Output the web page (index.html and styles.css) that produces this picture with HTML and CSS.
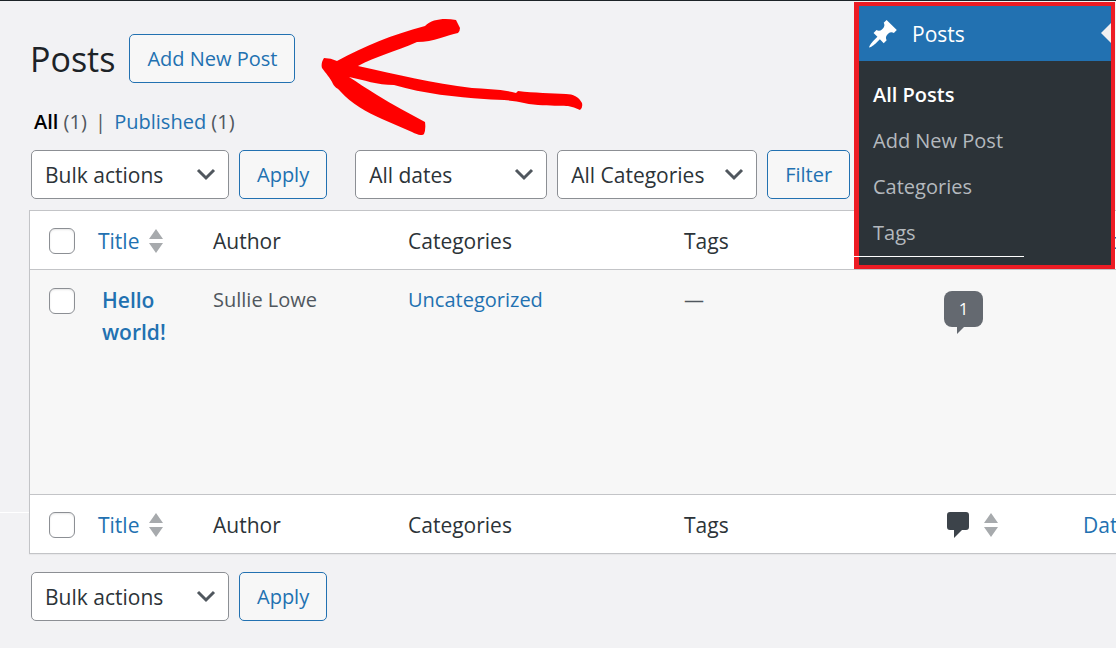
FILE: index.html
```html
<!DOCTYPE html>
<html lang="en">
  <head>
    <meta charset="UTF-8" />
    <meta name="viewport" content="width=device-width, initial-scale=1.0" />
    <title>Posts</title>
    <link rel="stylesheet" href="styles.css" />
  </head>
  <body>
    <main class="wrap">
      <header class="pageHead">
        <h1>Posts</h1>
        <button class="button" type="button">Add New Post</button>
      </header>

      <nav class="views">
        <a class="current" href="#">All</a> <span>(1)</span>
        <span class="sep">|</span>
        <a href="#">Published</a> <span>(1)</span>
      </nav>

      <div class="tablenav">
        <select class="bulk" aria-label="Bulk actions">
          <option>Bulk actions</option>
        </select>
        <button class="button" type="button">Apply</button>
        <div class="filters">
          <select class="dates" aria-label="Filter by date">
            <option>All dates</option>
          </select>
          <select class="cats" aria-label="Filter by category">
            <option>All Categories</option>
          </select>
          <button class="button" type="button">Filter</button>
        </div>
      </div>

      <div class="tableWrap">
        <table class="posts">
          <colgroup>
            <col class="colCheck" />
            <col class="colTitle" />
            <col class="colAuthor" />
            <col class="colCats" />
            <col class="colTags" />
            <col class="colComments" />
            <col />
          </colgroup>
          <thead>
            <tr>
              <th class="check"><input type="checkbox" aria-label="Select all" /></th>
              <th>
                <a class="sortable" href="#">Title
                  <svg class="sort" viewBox="0 0 14 24"><path d="M7 0l7 10H0zM0 14h14L7 24z" /></svg>
                </a>
              </th>
              <th>Author</th>
              <th>Categories</th>
              <th>Tags</th>
              <th>
                <a class="sortable comments" href="#" aria-label="Comments">
                  <svg class="bubble" viewBox="0 0 22 26"><path d="M3 0h16a3 3 0 0 1 3 3v12a3 3 0 0 1-3 3h-4l-8 8v-8H3a3 3 0 0 1-3-3V3a3 3 0 0 1 3-3z" /></svg>
                  <svg class="sort" viewBox="0 0 14 24"><path d="M7 0l7 10H0zM0 14h14L7 24z" /></svg>
                </a>
              </th>
              <th><a href="#">Date</a></th>
            </tr>
          </thead>
          <tbody>
            <tr>
              <td class="check"><input type="checkbox" aria-label="Select Hello world!" /></td>
              <td class="title"><a href="#">Hello world!</a></td>
              <td>Sullie Lowe</td>
              <td><a href="#">Uncategorized</a></td>
              <td>—</td>
              <td class="countCell"><a class="count" href="#">1</a></td>
              <td></td>
            </tr>
          </tbody>
          <tfoot>
            <tr>
              <th class="check"><input type="checkbox" aria-label="Select all" /></th>
              <th>
                <a class="sortable" href="#">Title
                  <svg class="sort" viewBox="0 0 14 24"><path d="M7 0l7 10H0zM0 14h14L7 24z" /></svg>
                </a>
              </th>
              <th>Author</th>
              <th>Categories</th>
              <th>Tags</th>
              <th>
                <a class="sortable comments" href="#" aria-label="Comments">
                  <svg class="bubble" viewBox="0 0 22 26"><path d="M3 0h16a3 3 0 0 1 3 3v12a3 3 0 0 1-3 3h-4l-8 8v-8H3a3 3 0 0 1-3-3V3a3 3 0 0 1 3-3z" /></svg>
                  <svg class="sort" viewBox="0 0 14 24"><path d="M7 0l7 10H0zM0 14h14L7 24z" /></svg>
                </a>
              </th>
              <th><a href="#">Date</a></th>
            </tr>
          </tfoot>
        </table>
      </div>

      <div class="tablenav">
        <select class="bulk" aria-label="Bulk actions">
          <option>Bulk actions</option>
        </select>
        <button class="button" type="button">Apply</button>
      </div>
    </main>

    <!-- Hand drawn arrow pointing at Add New Post -->
    <svg class="arrow" viewBox="0 0 264 120">
      <path d="M3 43C1 46 0 50 1 53C5 59 9 62 12 69C14 73 17 73 19 76C31 89 45 97 61 104L91 117C97 120 101 121 103 119Q105 114 104 107C88 98 72 90 56 80C46 74 36 67 28 62C43 65 56 70 73 70C103 79 136 82 163 84C179 85 193 85 203 88C222 92 241 90 247 91Q253 92 259 95Q262 93 261 88C258 82 252 79 245 79C231 78 213 78 197 76L195 78C181 74 165 74 151 73C111 68 77 60 37 51C55 41 74 37 96 27C113 27 126 20 137 18Q139 16 139 13L135 5C123 3 111 4 104 11C70 20 44 31 16 46Q10 43 3 43Z" />
    </svg>

    <aside class="menu">
      <a class="menuTop" href="#">
        <svg class="pin" viewBox="0 0 20 20"><path d="M10.44 3.02l1.82-1.82 6.36 6.35-1.83 1.82c-1.05-.68-2.48-.57-3.41.36l-.75.75c-.92.93-1.04 2.35-.35 3.41l-1.83 1.82-2.41-2.41-2.8 2.79c-.42.42-3.38 2.71-3.8 2.29s1.86-3.39 2.28-3.81l2.79-2.79L4.1 9.36l1.83-1.82c1.05.69 2.48.57 3.4-.36l.75-.75c.93-.92 1.05-2.35.36-3.41z" /></svg>
        Posts
      </a>
      <ul>
        <li><a class="current" href="#">All Posts</a></li>
        <li><a href="#">Add New Post</a></li>
        <li><a href="#">Categories</a></li>
        <li><a href="#">Tags</a></li>
      </ul>
    </aside>
  </body>
</html>
```

FILE: styles.css
```css
* {
  box-sizing: border-box;
}

body {
  position: relative;
  margin: 0;
  border-top: 1px solid #1d2327;
  background-color: #f2f2f4;
  color: #2c3338;
  font-family: "Segoe UI", "Open Sans", "Noto Sans", sans-serif;
  font-size: 21px;
  line-height: 32px;
  overflow-x: hidden;
}

a {
  color: #2271b1;
  text-decoration: none;
}

.wrap {
  padding: 33px 0 27px 29px;
}

.pageHead {
  display: flex;
  align-items: center;
  gap: 14px;
}

h1 {
  margin: 0;
  padding-left: 1px;
  color: #1d2327;
  font-size: 34px;
  font-weight: 400;
}

.button,
select {
  height: 49px;
  border: 1px solid #8c8f94;
  border-radius: 5px;
  font-family: inherit;
  font-size: 21px;
}

.button {
  padding: 0 17px;
  border-color: #2271b1;
  background-color: #f7f7f7;
  color: #2271b1;
  font-size: 20px;
}

select {
  appearance: none;
  padding: 0 13px;
  background: #fff url("data:image/svg+xml,%3Csvg xmlns='http://www.w3.org/2000/svg' width='20' height='14'%3E%3Cpath d='M2 2l8 8 8-8' fill='none' stroke='%2350575e' stroke-width='3'/%3E%3C/svg%3E") no-repeat right 12px center;
  color: #2c3338;
}

.views {
  margin: 23px 0 12px;
  padding-left: 5px;
  color: #50575e;
  font-size: 20px;
}

.views .current {
  color: #000;
  font-weight: 600;
}

.sep {
  margin: 0 3px;
}

.tablenav,
.filters {
  display: flex;
  gap: 10px;
}

.tablenav {
  padding-left: 2px;
}

.filters {
  margin-left: 18px;
}

.bulk {
  width: 198px;
}

.dates {
  width: 192px;
}

.cats {
  width: 200px;
}

.tableWrap {
  position: relative;
  margin: 11px 0 18px;
}

/* thin rule in the gutter beside the footer row */
.tableWrap::before {
  content: "";
  position: absolute;
  left: -29px;
  bottom: 41px;
  width: 29px;
  height: 1px;
  background-color: #fff;
}

.posts {
  width: 110%;
  table-layout: fixed;
  border: 1px solid #c3c4c7;
  border-spacing: 0;
  background-color: #fff;
  box-shadow: 0 1px 1px rgba(0, 0, 0, 0.04);
}

.colCheck {
  width: 58px;
}

.colTitle {
  width: 115px;
}

.colAuthor {
  width: 195px;
}

.colCats {
  width: 276px;
}

.colTags {
  width: 263px;
}

.colComments {
  width: 136px;
}

th {
  height: 59px;
  padding: 2px 10px 0;
  font-weight: 400;
  text-align: left;
  vertical-align: middle;
}

thead th {
  border-bottom: 1px solid #c3c4c7;
}

tfoot th {
  border-top: 1px solid #c3c4c7;
}

td {
  height: 224px;
  padding: 14px 10px;
  background-color: #f7f7f7;
  color: #50575e;
  font-size: 20px;
  vertical-align: top;
}

th.check,
td.check {
  padding-left: 19px;
  padding-right: 0;
}

td.check {
  padding-top: 18px;
}

.title {
  padding-left: 14px;
  font-size: 21px;
  font-weight: 600;
}

input[type="checkbox"] {
  appearance: none;
  display: block;
  width: 26px;
  height: 26px;
  margin: 0;
  border: 1px solid #8c8f94;
  border-radius: 6px;
  background-color: #fff;
  box-shadow: inset 0 1px 2px rgba(0, 0, 0, 0.1);
}

.sortable {
  display: flex;
  align-items: center;
  gap: 10px;
}

.sort {
  width: 14px;
  height: 24px;
  fill: #a7aaad;
}

.comments {
  gap: 15px;
}

.bubble {
  width: 22px;
  height: 26px;
  fill: #3c434a;
}

.countCell {
  padding: 21px 7px;
}

.count {
  position: relative;
  display: block;
  width: 39px;
  height: 36px;
  border-radius: 8px;
  background-color: #646970;
  color: #fff;
  font-size: 17px;
  line-height: 36px;
  text-align: center;
}

.count::after {
  content: "";
  position: absolute;
  top: 36px;
  left: 13px;
  border-top: 7px solid #646970;
  border-right: 7px solid transparent;
}

.arrow {
  position: absolute;
  top: 14px;
  left: 321px;
  width: 264px;
  height: 120px;
  fill: #f00;
}

.menu {
  position: absolute;
  top: 1px;
  right: 1px;
  width: 261px;
  border: 4px solid #ed1c24;
  border-left-width: 5px;
  background-color: #2c3338;
}

.menu::after {
  content: "";
  position: absolute;
  left: -5px;
  bottom: 8px;
  width: 170px;
  height: 1px;
  background-color: #fff;
}

.menuTop {
  position: relative;
  display: flex;
  align-items: center;
  gap: 13px;
  height: 55px;
  padding-left: 8px;
  background-color: #2271b1;
  color: #fff;
}

/* white notch on the open menu item */
.menuTop::after {
  content: "";
  position: absolute;
  top: 17px;
  right: 0;
  border: 10px solid transparent;
  border-right-color: #f0f0f1;
  border-left-width: 0;
}

.pin {
  width: 32px;
  height: 32px;
  fill: #fff;
}

.menu ul {
  margin: 0;
  padding: 11px 14px 9px;
  font-size: 20px;
  list-style: none;
}

.menu li {
  padding: 7px 0;
}

.menu li a {
  color: #b4b9be;
}

.menu li .current {
  color: #fff;
  font-weight: 600;
}
```
